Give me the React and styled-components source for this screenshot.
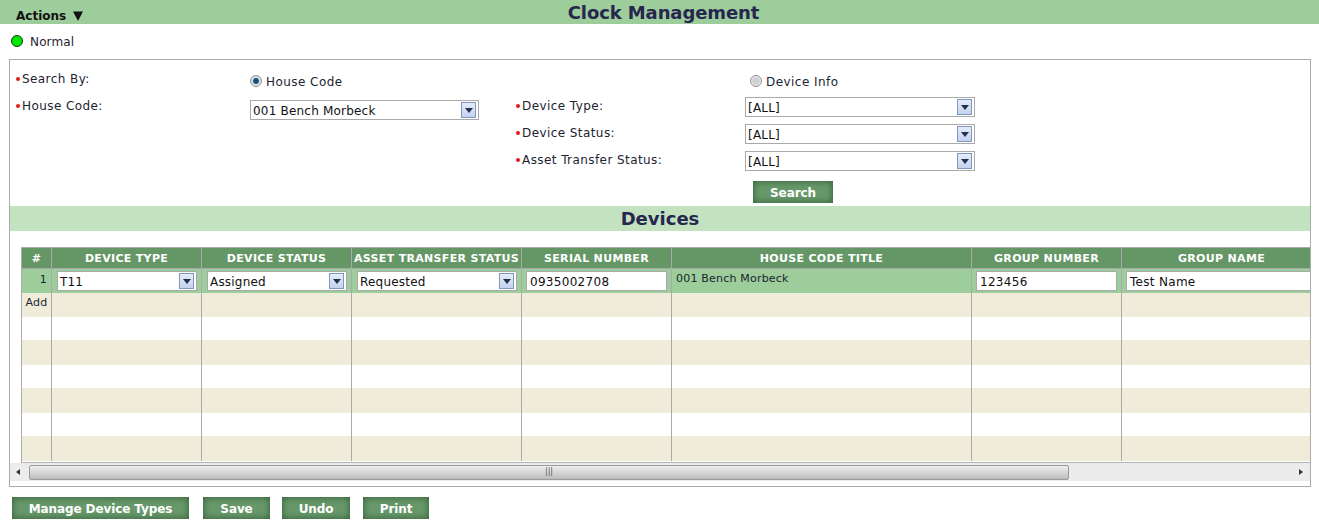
import React from "react";
import styled, { createGlobalStyle } from "styled-components";

const Global = createGlobalStyle`
  html, body { margin: 0; padding: 0; background: #fff; }
  body { font-family: "DejaVu Sans", Verdana, sans-serif; font-size: 12px; color: #1c2430; }
  * { box-sizing: border-box; }
`;

const Page = styled.div`
  width: 1319px;
  height: 531px;
  overflow: hidden;
`;

const TitleBar = styled.header`
  height: 24px;
  background: #9dcd9b;
  display: grid;
  grid-template-columns: 1fr auto 1fr;
  align-items: center;
`;

const ActionsMenu = styled.div`
  padding: 7px 0 0 16px;
  font-size: 12px;
  font-weight: 700;
  color: #111;
  display: flex;
  align-items: center;
  gap: 7px;
`;

const Title = styled.h1`
  margin: 0;
  padding: 1px 0 0 8px;
  font-size: 18px;
  letter-spacing: -0.1px;
  line-height: 24px;
  font-weight: 700;
  color: #26264f;
`;

const StatusRow = styled.div`
  height: 35px;
  padding: 10px 0 0 11px;
  display: flex;
  align-items: flex-start;
  gap: 7px;
  line-height: 14px;
`;

const StatusDot = styled.span`
  width: 12px;
  height: 12px;
  margin-top: 1px;
  border-radius: 50%;
  background: #00e600;
  border: 1px solid #0a3a0a;
  flex: none;
`;

const StatusText = styled.span`
  padding-top: 1px;
  letter-spacing: 0.15px;
`;

const Panel = styled.section`
  margin-left: 9px;
  width: 1302px;
  height: 428px;
  border: 1px solid #aaa;
`;

const SearchForm = styled.div`
  display: flex;
  height: 146px;
  padding: 10px 0 0 6px;
`;

const FormColumn = styled.div`
  width: ${(p) => p.$width}px;
  display: grid;
  grid-template-columns: ${(p) => p.$label}px 1fr;
  grid-auto-rows: 27px;
`;

const Label = styled.label`
  padding-top: 2px;
  line-height: 14px;
  letter-spacing: 0.42px;
  display: flex;
  align-items: flex-start;
  white-space: nowrap;
`;

const Bullet = styled.span`
  width: 4px;
  height: 4px;
  margin: 5px 2px 0 0;
  border-radius: 50%;
  background: #e21b12;
  flex: none;
`;

const RadioLabel = styled.div`
  padding-top: 5px;
  display: flex;
  align-items: flex-start;
  gap: 4px;
  line-height: 14px;
  letter-spacing: 0.45px;
  margin-left: ${(p) => p.$inset || 0}px;
`;

const RadioMark = styled.span`
  width: 12px;
  height: 12px;
  border-radius: 50%;
  border: 1px solid #909090;
  background: ${(p) =>
    p.$on
      ? "radial-gradient(circle, #0f4f80 0 2.4px, #d8d8d8 3.4px, #f4f4f4 100%)"
      : "radial-gradient(circle, #cfcfcf 0 3px, #e8e8e8 4.5px, #f4f4f4 100%)"};
  flex: none;
`;

const SelectBox = styled.div`
  position: relative;
  width: ${(p) => p.$width || 229}px;
  height: 20px;
  margin-top: ${(p) => p.$top || 0}px;
  border: 1px solid #a9a9a9;
  background: #fff;
  display: flex;
  align-items: center;
  padding: 2px 0 0 2px;
  font-size: 12px;
  letter-spacing: 0.2px;
  color: #111;
  white-space: nowrap;
`;

const SelectArrow = styled.span`
  position: absolute;
  right: 2px;
  top: 1px;
  bottom: 1px;
  width: 15px;
  border: 1px solid #7f97bd;
  background: linear-gradient(#e4ecfa, #c3d3f0);
  display: flex;
  align-items: center;
  justify-content: center;
  &::after {
    content: "";
    border-left: 4px solid transparent;
    border-right: 4px solid transparent;
    border-top: 5px solid #27304a;
  }
`;

const Button = styled.button`
  height: 22px;
  width: ${(p) => p.$width}px;
  padding: 1px 0 0;
  border: 0;
  background: #67986a;
  box-shadow: inset 0 0 6px 1px #3a6540;
  color: #fff;
  font-family: inherit;
  font-size: 12px;
  font-weight: 700;
  letter-spacing: -0.1px;
  text-align: center;
`;

const SearchSlot = styled.div`
  padding: 3px 0 0 8px;
  grid-column: 2;
`;

const SectionBar = styled.div`
  height: 25px;
  background: #c3e2c0;
  text-align: center;
  font-size: 18px;
  line-height: 25px;
  font-weight: 700;
  color: #26264f;
`;

const GridArea = styled.div`
  margin: 16px 0 0 11px;
  width: 1289px;
  height: 216px;
  border-left: 1px solid #aaa;
  border-bottom: 1px solid #b5b5b5;
  overflow: hidden;
`;

const COLS = "30px 150px 150px 170px 150px 300px 150px 200px";

const HeaderRow = styled.div`
  display: grid;
  grid-template-columns: ${COLS};
  height: 22px;
  border-top: 1px solid #aaa;
  border-bottom: 1px solid #aaa;
  background: #659766;
`;

const HeaderCell = styled.div`
  border-right: 1px solid #aaa;
  color: #fff;
  font-size: 11px;
  font-weight: 700;
  letter-spacing: 0.32px;
  line-height: 21px;
  text-align: center;
  white-space: nowrap;
  overflow: hidden;
`;

const Row = styled.div`
  display: grid;
  grid-template-columns: ${COLS};
  height: ${(p) => p.$height || 24}px;
  background: ${(p) => p.$bg};
`;

const Cell = styled.div`
  border-right: 1px solid #aaa;
  position: relative;
  padding: ${(p) => p.$pad || "2px 0 0 5px"};
  font-size: 11px;
  line-height: 14px;
  letter-spacing: 0.2px;
  color: #1c2430;
  text-align: ${(p) => p.$align || "left"};
  white-space: nowrap;
  overflow: hidden;
`;

const TextBox = styled.div`
  width: ${(p) => p.$width}px;
  height: 20px;
  border: 1px solid #a9a9a9;
  background: #fff;
  padding: 1px 0 0 3px;
  font-size: 12px;
  line-height: 19px;
  letter-spacing: 0.3px;
  color: #111;
`;

const ScrollBar = styled.div`
  width: 1300px;
  height: 18px;
  background: #ececec;
  display: flex;
  align-items: center;
  position: relative;
`;

const ScrollArrow = styled.span`
  position: absolute;
  top: 6px;
  ${(p) => (p.$right ? "right: 7px;" : "left: 6px;")}
  border-top: 3.5px solid transparent;
  border-bottom: 3.5px solid transparent;
  ${(p) => (p.$right ? "border-left: 4px solid #333;" : "border-right: 4px solid #333;")}
`;

const ScrollThumb = styled.div`
  margin-left: 19px;
  width: 1040px;
  height: 15px;
  border: 1px solid #9a9a9a;
  border-radius: 2px;
  background: linear-gradient(#efefef, #bcbcbc);
  display: flex;
  align-items: center;
  justify-content: center;
  color: #555;
  font-size: 8px;
  line-height: 1;
`;

const Footer = styled.div`
  display: flex;
  padding: 10px 0 0 12px;
`;

const FooterButton = styled(Button)`
  margin-right: ${(p) => p.$gap}px;
`;

const Field = ({ children }) => (
  <Label>
    <Bullet />
    {children}
  </Label>
);

const Select = ({ value, ...rest }) => (
  <SelectBox {...rest}>
    {value}
    <SelectArrow />
  </SelectBox>
);

const headers = [
  "#",
  "DEVICE TYPE",
  "DEVICE STATUS",
  "ASSET TRANSFER STATUS",
  "SERIAL NUMBER",
  "HOUSE CODE TITLE",
  "GROUP NUMBER",
  "GROUP NAME",
];

const emptyRows = [
  { bg: "#efedda", height: 24, label: "Add" },
  { bg: "#fff", height: 23 },
  { bg: "#efedda", height: 25 },
  { bg: "#fff", height: 23 },
  { bg: "#efedda", height: 25 },
  { bg: "#fff", height: 23 },
  { bg: "#efedda", height: 25 },
];

const EmptyCells = () => (
  <>
    {headers.slice(1).map((h) => (
      <Cell key={h} />
    ))}
  </>
);

export default function App() {
  return (
    <Page>
      <Global />
      <TitleBar>
        <ActionsMenu>
          Actions
          <svg width="10" height="10" viewBox="0 0 10 10">
            <path d="M0 0.5h10L5 10z" fill="#111" />
          </svg>
        </ActionsMenu>
        <Title>Clock Management</Title>
      </TitleBar>
      <StatusRow>
        <StatusDot />
        <StatusText>Normal</StatusText>
      </StatusRow>
      <Panel>
        <SearchForm>
          <FormColumn $width={500} $label={234}>
            <Field>Search By:</Field>
            <RadioLabel>
              <RadioMark $on />
              House Code
            </RadioLabel>
            <Field>House Code:</Field>
            <Select value="001 Bench Morbeck" $top={3} />
          </FormColumn>
          <FormColumn $width={500} $label={229}>
            <span />
            <RadioLabel $inset={5}>
              <RadioMark />
              Device Info
            </RadioLabel>
            <Field>Device Type:</Field>
            <Select value="[ALL]" $width={230} />
            <Field>Device Status:</Field>
            <Select value="[ALL]" $width={230} />
            <Field>Asset Transfer Status:</Field>
            <Select value="[ALL]" $width={230} />
            <SearchSlot>
              <Button $width={80}>Search</Button>
            </SearchSlot>
          </FormColumn>
        </SearchForm>
        <SectionBar>Devices</SectionBar>
        <GridArea>
          <HeaderRow>
            {headers.map((h) => (
              <HeaderCell key={h}>{h}</HeaderCell>
            ))}
          </HeaderRow>
          <Row $bg="#9dcd9b">
            <Cell $align="right" $pad="4px 4px 0 0">1</Cell>
            <Cell><Select value="T11" $width={140} /></Cell>
            <Cell><Select value="Assigned" $width={140} /></Cell>
            <Cell><Select value="Requested" $width={160} /></Cell>
            <Cell $pad="2px 0 0 4px"><TextBox $width={141}>0935002708</TextBox></Cell>
            <Cell $pad="3px 0 0 4px">001 Bench Morbeck</Cell>
            <Cell $pad="2px 0 0 4px"><TextBox $width={141}>123456</TextBox></Cell>
            <Cell $pad="2px 0 0 4px"><TextBox $width={195}>Test Name</TextBox></Cell>
          </Row>
          {emptyRows.map((row, i) => (
            <Row key={i} $bg={row.bg} $height={row.height}>
              <Cell $align="center" $pad="3px 0 0 0">{row.label}</Cell>
              <EmptyCells />
            </Row>
          ))}
        </GridArea>
        <ScrollBar>
          <ScrollArrow />
          <ScrollThumb>|||</ScrollThumb>
          <ScrollArrow $right />
        </ScrollBar>
      </Panel>
      <Footer>
        <FooterButton $width={177} $gap={14}>Manage Device Types</FooterButton>
        <FooterButton $width={67} $gap={12}>Save</FooterButton>
        <FooterButton $width={68} $gap={13}>Undo</FooterButton>
        <FooterButton $width={66} $gap={0}>Print</FooterButton>
      </Footer>
    </Page>
  );
}
